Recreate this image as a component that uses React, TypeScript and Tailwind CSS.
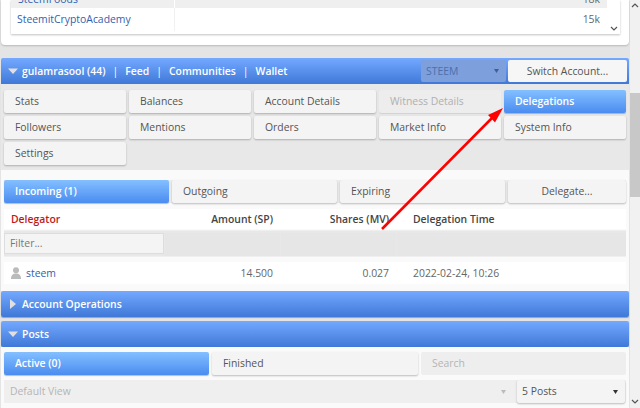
import React from "react";

const blue = "bg-gradient-to-b from-[#74a9ff] to-[#3f78d8]";
const activeBlue = "bg-gradient-to-b from-[#84bfff] to-[#4a8cf0] text-white font-semibold shadow-[0_1px_1px_rgba(0,0,0,0.25)]";
const btn = "bg-[#f4f4f4] text-[#555] shadow-[0_1px_2px_rgba(0,0,0,0.25)] rounded-[2px]";

function Btn({ label, cls = btn }: { label: string; cls?: string }) {
  return <div className={`h-[23px] flex items-center pl-[11px] rounded-[2px] ${cls}`}>{label}</div>;
}

function Caret({ open }: { open: boolean }) {
  return (
    <svg width="10" height="10" viewBox="0 0 10 10" className="shrink-0">
      {open ? <path d="M0 2.500h10L5 8z" fill="#e0e0e0" /> : <path d="M2 0l6 5-6 5z" fill="#e0e0e0" />}
    </svg>
  );
}

function Bar({ open, children, cls = "" }: { open: boolean; children: React.ReactNode; cls?: string }) {
  return (
    <div className={`h-[26px] mx-[1px] rounded-[2px] flex items-center pl-[7px] gap-[4px] text-white font-semibold shadow-[0_1px_1px_rgba(0,0,0,0.3)] ${blue} ${cls}`}>
      <Caret open={open} />
      {children}
    </div>
  );
}

export default function App() {
  return (
    <div className="relative w-[640px] h-[408px] overflow-hidden flex bg-[#e4e4e4] text-[10.4px] leading-none" style={{ fontFamily: '"Open Sans", sans-serif' }}>
      <main className="w-[630px] flex flex-col">
        {/* Top card */}
        <section className="h-[45px] mx-[1px] bg-white rounded-b-[4px] shadow-[0_1px_2px_rgba(0,0,0,0.2)] pl-[10px] pr-[9px]">
          <div className="h-[34px] bg-white shadow-[0_1px_2px_rgba(0,0,0,0.25)] flex">
            <div className="w-[596px] flex flex-col">
              <div className="h-[8px] bg-[#efefef] flex overflow-hidden shrink-0">
                <div className="w-[164px] border-r border-white pl-[7px] text-[#2f5fb0] -mt-[6px]">SteemFoods</div>
                <div className="flex-1 text-right pr-[7px] text-[#666] -mt-[6px]">18k</div>
              </div>
              <div className="h-[23px] flex items-center shrink-0">
                <div className="w-[164px] h-full flex items-center border-r border-[#f1f1f1] pl-[6px] text-[#2f5fb0]">SteemitCryptoAcademy</div>
                <div className="flex-1 text-right pr-[7px] text-[#666]">15k</div>
              </div>
            </div>
            <div className="flex-1 flex items-end justify-center pb-[2px]">
              <svg width="8" height="6" viewBox="0 0 8 6"><path d="M1 1l3 3 3-3" fill="none" stroke="#555" strokeWidth="1.2" /></svg>
            </div>
          </div>
        </section>

        {/* User bar */}
        <div className="mt-[13px] h-[26px] mx-[1px] rounded-t-[2px] flex items-center pl-[7px] gap-[4px] text-white font-semibold bg-gradient-to-b from-[#74a9ff] to-[#3f78d8]">
          <Caret open />
          <span>gulamrasool (44)</span>
          <span className="mx-[3px] font-normal">|</span>
          <span>Feed</span>
          <span className="mx-[3px] font-normal">|</span>
          <span>Communities</span>
          <span className="mx-[3px] font-normal">|</span>
          <span>Wallet</span>
          <div className="ml-auto flex items-center gap-[2px] pr-[2px] h-full">
            <div className="w-[85px] h-[22px] bg-[#7d9fdb] rounded-[2px] flex items-center justify-between pl-[5px] pr-[7px] text-[#4d6fae] font-normal">
              STEEM
              <svg width="5" height="4" viewBox="0 0 5 4"><path d="M0 0h5L2.500 4z" fill="#3f5f98" /></svg>
            </div>
            <div className="w-[119px] h-[22px] bg-[#f6f6f6] text-[#555] font-normal flex items-center justify-center rounded-[2px]">Switch Account...</div>
          </div>
        </div>

        {/* Nav buttons */}
        <nav className="h-[86px] mx-[1px] bg-[#e8e8e8] px-[3px] pt-[6px] grid grid-cols-5 gap-[3px] content-start">
          <Btn label="Stats" />
          <Btn label="Balances" />
          <Btn label="Account Details" />
          <Btn label="Witness Details" cls="bg-[#ededed] text-[#b0b0b0] shadow-[0_1px_1px_rgba(0,0,0,0.1)]" />
          <Btn label="Delegations" cls={activeBlue} />
          <Btn label="Followers" />
          <Btn label="Mentions" />
          <Btn label="Orders" />
          <Btn label="Market Info" />
          <Btn label="System Info" />
          <Btn label="Settings" />
        </nav>

        {/* Delegations */}
        <section className="h-[121px] mx-[1px] bg-[#fafafa]">
          <div className="h-[10px]" />
          <div className="h-[23px] flex bg-[#ececec] mx-[3px] gap-[3px]">
            <div className="w-[165px]"><Btn label="Incoming (1)" cls={activeBlue} /></div>
            <div className="w-[165px]"><Btn label="Outgoing" /></div>
            <div className="w-[165px]"><Btn label="Expiring" /></div>
            <div className={`flex-1 h-[23px] flex items-center justify-center ${btn}`}>Delegate...</div>
          </div>
          <div className="mx-[3px] mt-[6px] text-[#555]">
            <div className="h-[20px] grid grid-cols-[160px_116px_116px_1fr] items-center font-semibold bg-white text-[#444]">
              <div className="pl-[7px] text-[#c01818]">Delegator</div>
              <div className="text-right pr-[7px]">Amount (SP)</div>
              <div className="text-right pr-[7px]">Shares (MV)</div>
              <div className="pl-[17px]">Delegation Time</div>
            </div>
            <div className="h-[27px] mt-[1px] pt-[2px] grid grid-cols-[160px_115px_115px_1fr] gap-x-[1px] bg-[#e8e8e8] border-y border-[#efefef]">
              <div className="bg-[#f4f4f4] border border-[#ddd] flex items-center pl-[5px] text-[#777] h-[21px]">Filter...</div>
              <div className="bg-[#e6e6e6]" />
              <div className="bg-[#e6e6e6]" />
              <div className="bg-[#e6e6e6]" />
            </div>
            <div className="mt-[5px] h-[22px] grid grid-cols-[160px_116px_116px_1fr] items-center text-[#666] bg-white">
              <div className="pl-[6px] flex items-center gap-[4px] text-[#2f5fb0]">
                <svg width="12" height="12" viewBox="0 0 12 12"><circle cx="6" cy="3.300" r="3" fill="#bbb" /><path d="M1 12c0-4 2-5.500 5-5.500s5 1.500 5 5.500z" fill="#bbb" /></svg>
                steem
              </div>
              <div className="text-right pr-[7px]">14.500</div>
              <div className="text-right pr-[7px]">0.027</div>
              <div className="pl-[17px]">2022-02-24, 10:26</div>
            </div>
          </div>
        </section>

        <Bar open={false}>Account Operations</Bar>
        <Bar open cls="mt-[4px]">Posts</Bar>

        <div className="mx-[1px] bg-[#fafafa] h-[61px] px-[3px]">
          <div className="pt-[5px] flex gap-[3px]">
            <div className="w-[205px]"><Btn label="Active (0)" cls={activeBlue} /></div>
            <div className="w-[206px]"><Btn label="Finished" /></div>
            <div className="flex-1 h-[23px] bg-[#eeeeee] text-[#b5b5b5] flex items-center pl-[11px] rounded-[2px]">Search</div>
          </div>
          <div className="mt-[5px] flex gap-[3px] bg-[#eeeeee] rounded-[2px]">
            <div className="w-[510px] h-[23px] bg-[#efefef] text-[#b5b5b5] flex items-center justify-between pl-[6px] pr-[8px]">
              Default View
              <svg width="5" height="4" viewBox="0 0 5 4"><path d="M0 0h5L2.500 4z" fill="#bbb" /></svg>
            </div>
            <div className={`w-[108px] h-[23px] flex items-center justify-between pl-[5px] pr-[7px] ${btn}`}>
              5 Posts
              <svg width="5" height="4" viewBox="0 0 5 4"><path d="M0 0h5L2.500 4z" fill="#333" /></svg>
            </div>
          </div>
        </div>
      </main>

      {/* Scrollbar */}
      <aside className="w-[10px] bg-[#f1f1f1] flex flex-col items-center">
        <svg width="8" height="6" viewBox="0 0 8 6" className="mt-[2px]"><path d="M1 5l3-3 3 3" fill="none" stroke="#555" strokeWidth="1.200" /></svg>
        <div className="mt-[85px] w-full h-[104px] bg-[#c8c8c8]" />
        <div className="flex-1" />
        <svg width="8" height="6" viewBox="0 0 8 6" className="mb-[3px]"><path d="M1 1l3 3 3-3" fill="none" stroke="#555" strokeWidth="1.200" /></svg>
      </aside>

      {/* Annotation arrow */}
      <svg className="absolute left-0 top-0 pointer-events-none" width="640" height="408" viewBox="0 0 640 408">
        <line x1="382" y1="229" x2="492" y2="118" stroke="#f00" strokeWidth="2.500" />
        <path d="M503 108L488 115L495 122.500z" fill="#f00" />
      </svg>
    </div>
  );
}
